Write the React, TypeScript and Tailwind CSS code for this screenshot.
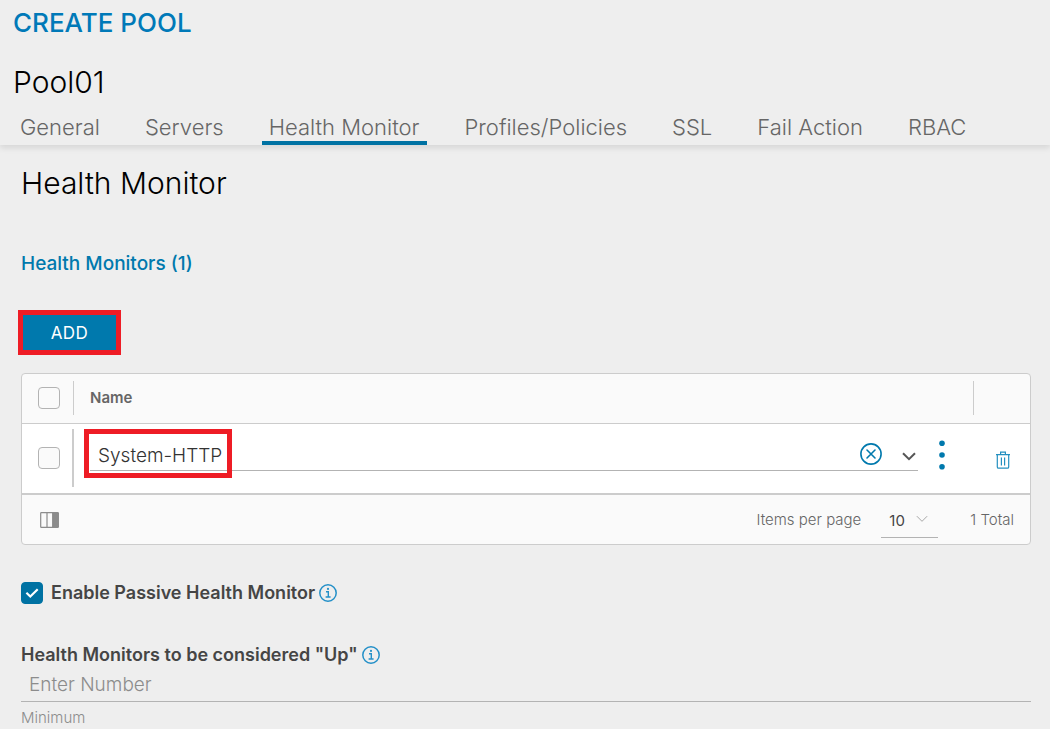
import { useState } from 'react'
import clsx from 'clsx'

const TABS = [
  'General',
  'Servers',
  'Health Monitor',
  'Profiles/Policies',
  'SSL',
  'Fail Action',
  'RBAC',
]

function InfoIcon() {
  return (
    <svg viewBox="0 0 18 18" className="size-[18px]" fill="none" stroke="#2490c8" aria-hidden="true">
      <circle cx="9" cy="9" r="8.2" strokeWidth="1.5" />
      <path d="M7 7.8h2.3v5.2M6.6 13h5" strokeWidth="1.4" />
      <circle cx="9" cy="4.9" r="1.1" fill="#2490c8" stroke="none" />
    </svg>
  )
}

function ClearIcon() {
  return (
    <svg viewBox="0 0 22 22" className="size-[22px]" fill="none" stroke="#0079ad" aria-hidden="true">
      <circle cx="11" cy="11" r="10.1" strokeWidth="1.6" />
      <path d="M7 7l8 8M15 7l-8 8" strokeWidth="1.6" strokeLinecap="round" />
    </svg>
  )
}

function Chevron({ className }: { className?: string }) {
  return (
    <svg viewBox="0 0 14 9" className={className} fill="none" stroke="currentColor" aria-hidden="true">
      <path d="M1 1.2l6 6 6-6" />
    </svg>
  )
}

function KebabIcon() {
  return (
    <svg viewBox="0 0 6 30" className="h-[30px] w-1.5" fill="#0079ad" aria-hidden="true">
      <circle cx="3" cy="3.3" r="2.8" />
      <circle cx="3" cy="15" r="2.8" />
      <circle cx="3" cy="26.7" r="2.8" />
    </svg>
  )
}

function TrashIcon() {
  return (
    <svg viewBox="0 0 16 18" className="h-[18px] w-4" fill="none" stroke="#2490c0" strokeWidth="1.2" aria-hidden="true">
      <path d="M1 3.6h14M5.6 3.4V1.1h4.8v2.3M2.3 3.8v12.1c0 .8.5 1.3 1.3 1.3h8.8c.8 0 1.3-.5 1.3-1.3V3.8M6.4 6.4v8M9.6 6.4v8" />
    </svg>
  )
}

function ColumnsIcon() {
  return (
    <svg viewBox="0 0 19 16" className="h-4 w-[19px]" fill="none" stroke="#8c8c8c" aria-hidden="true">
      <rect x="0.7" y="0.7" width="17.6" height="14.6" rx="0.6" strokeWidth="1.2" />
      <path d="M7 1v14" strokeWidth="1.2" />
      <path d="M12.6 1h5.7v14h-5.7z" fill="#8c8c8c" />
    </svg>
  )
}

function CheckBox({ label }: { label: string }) {
  return (
    <input
      type="checkbox"
      aria-label={label}
      className="block size-[22px] appearance-none rounded-[4px] border border-[#b3b3b3] bg-[#fafafa] checked:bg-[#0072a3]"
    />
  )
}

function MonitorTable() {
  const [monitor, setMonitor] = useState('System-HTTP')

  return (
    <div className="rounded-[4px] border border-[#cccccc] bg-[#fafafa] text-[#666666]">
      <table className="w-full table-fixed border-collapse">
        <thead>
          <tr className="h-[49px] border-b border-[#cccccc]">
            <th className="w-[52px] p-0">
              <div className="flex h-[34px] items-center border-r border-[#cccccc] pl-4">
                <CheckBox label="Select all" />
              </div>
            </th>
            <th className="p-0 pl-4 text-left text-[15px] leading-5 font-semibold">Name</th>
            <th className="w-[57px] p-0">
              <div className="h-[34px] border-l border-[#cccccc]" />
            </th>
          </tr>
        </thead>
        <tbody>
          <tr className="h-[71px] border-b-2 border-[#cccccc] bg-white">
            <td className="p-0">
              <div className="flex h-[58px] items-center border-r-2 border-[#cccccc] pl-4">
                <CheckBox label="Select row" />
              </div>
            </td>
            <td className="p-0 pl-4">
              <div className="flex items-center gap-[21px] pr-7 pb-1.5">
                <div className="relative flex h-8 flex-1 items-center border-b border-[#b3b3b3] pr-0.5">
                  <input
                    aria-label="Health monitor"
                    value={monitor}
                    onChange={(e) => setMonitor(e.target.value)}
                    className="min-w-0 flex-1 bg-transparent pt-0.5 pl-2 text-[19px] leading-6 font-light text-[#333333] outline-none"
                  />
                  <div className="pointer-events-none absolute -top-2.5 -left-1.5 h-[49px] w-[148px] border-[5px] border-[#ee1c25]" />
                  <button type="button" aria-label="Clear" className="mr-5 pb-0.5" onClick={() => setMonitor('')}>
                    <ClearIcon />
                  </button>
                  <button type="button" aria-label="Open list" className="pt-1">
                    <Chevron className="h-[9px] w-3.5 stroke-2 text-[#565656]" />
                  </button>
                </div>
                <button type="button" aria-label="More actions">
                  <KebabIcon />
                </button>
              </div>
            </td>
            <td className="p-0">
              <button type="button" aria-label="Delete" className="mt-1 ml-[22px] block">
                <TrashIcon />
              </button>
            </td>
          </tr>
        </tbody>
      </table>

      <div className="flex h-[49px] items-center pr-4 pl-[18px] text-[15px] leading-5 font-light">
        <button type="button" aria-label="Manage columns">
          <ColumnsIcon />
        </button>
        <label htmlFor="page-size" className="mr-5 ml-auto">
          Items per page
        </label>
        <div className="relative mt-1 mr-8 w-[57px] border-b border-[#b3b3b3]">
          <select
            id="page-size"
            className="block h-8 w-full appearance-none bg-transparent pl-2 font-normal text-[#454545] outline-none"
          >
            <option>10</option>
            <option>20</option>
            <option>50</option>
          </select>
          <Chevron className="pointer-events-none absolute top-2.5 right-2.5 h-2 w-3 text-[#999999]" />
        </div>
        <span>1 Total</span>
      </div>
    </div>
  )
}

export default function App() {
  const [activeTab, setActiveTab] = useState('Health Monitor')

  return (
    <div className="min-h-screen bg-[#eeeeee] font-[Inter,sans-serif] text-[#454545]">
      <header className="shadow-[0_3px_6px_rgba(0,0,0,0.1)]">
        <h1 className="px-[13px] pt-[7px] text-[26px] leading-8 font-medium text-[#0079b8]">CREATE POOL</h1>
        <h2 className="px-[13px] pt-[25px] text-[30px] leading-9 font-light text-black">Pool01</h2>
        <nav className="flex gap-[31px] px-[13px] pt-[9px]" role="tablist">
          {TABS.map((tab) => (
            <button
              key={tab}
              type="button"
              role="tab"
              aria-selected={tab === activeTab}
              onClick={() => setActiveTab(tab)}
              className={clsx(
                'border-b-4 px-[7px] pt-1 text-[22px] leading-7 font-light whitespace-nowrap text-[#666666]',
                tab === activeTab ? 'border-[#0072a3]' : 'border-transparent',
              )}
            >
              {tab}
            </button>
          ))}
        </nav>
      </header>

      <main className="pt-5 pr-[19px] pl-[21px]">
        <h3 className="text-[30px] leading-9 font-light text-black">Health Monitor</h3>
        <h4 className="mt-[51px] text-[19px] leading-6 font-medium text-[#0079ad]">Health Monitors (1)</h4>

        <button
          type="button"
          className="mt-[34px] -ml-[3px] block h-[45px] w-[103px] border-[5px] border-[#ee1c25] bg-[#0079ad] text-[17px] leading-5 tracking-wide text-white"
        >
          ADD
        </button>

        <div className="mt-[18px]">
          <MonitorTable />
        </div>

        <div className="mt-9 flex items-center">
          <label className="flex items-center gap-2 text-[18px] leading-6 font-semibold">
            <span className="relative block size-[22px]">
              <input
                type="checkbox"
                defaultChecked
                className="peer block size-full appearance-none rounded-[4px] border border-[#b3b3b3] checked:border-[#0072a3] checked:bg-[#0072a3]"
              />
              <svg
                viewBox="0 0 22 22"
                className="pointer-events-none absolute inset-0 hidden peer-checked:block"
                fill="none"
                stroke="#ffffff"
                strokeWidth="2.2"
                aria-hidden="true"
              >
                <path d="M5.4 10.8l3.9 3.7 7.4-7.2" />
              </svg>
            </span>
            Enable Passive Health Monitor
          </label>
          <button type="button" aria-label="About passive health monitor" className="ml-1">
            <InfoIcon />
          </button>
        </div>

        <div className="mt-[38px] flex items-center">
          <label htmlFor="monitors-up" className="text-[18px] leading-6 font-semibold">
            Health Monitors to be considered "Up"
          </label>
          <button type="button" aria-label="About monitors considered up" className="ml-1">
            <InfoIcon />
          </button>
        </div>
        <input
          id="monitors-up"
          placeholder="Enter Number"
          className="block h-[35px] w-full border-b border-[#b3b3b3] bg-transparent px-2 text-[19px] leading-6 font-light outline-none placeholder:text-[#8c8c8c]"
        />
        <p className="mt-1.5 text-[15px] leading-5 font-light text-[#8c8c8c]">Minimum</p>
      </main>
    </div>
  )
}
